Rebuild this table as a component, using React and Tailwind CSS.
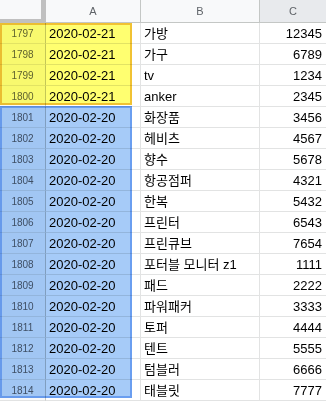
import React from "react";

const rows = [
  [1797, "2020-02-21", "가방", "12345"],
  [1798, "2020-02-21", "가구", "6789"],
  [1799, "2020-02-21", "tv", "1234"],
  [1800, "2020-02-21", "anker", "2345"],
  [1801, "2020-02-20", "화장품", "3456"],
  [1802, "2020-02-20", "헤비츠", "4567"],
  [1803, "2020-02-20", "향수", "5678"],
  [1804, "2020-02-20", "항공점퍼", "4321"],
  [1805, "2020-02-20", "한복", "5432"],
  [1806, "2020-02-20", "프린터", "6543"],
  [1807, "2020-02-20", "프린큐브", "7654"],
  [1808, "2020-02-20", "포터블 모니터 z1", "1111"],
  [1809, "2020-02-20", "패드", "2222"],
  [1810, "2020-02-20", "파워패커", "3333"],
  [1811, "2020-02-20", "토퍼", "4444"],
  [1812, "2020-02-20", "텐트", "5555"],
  [1813, "2020-02-20", "텀블러", "6666"],
  [1814, "2020-02-20", "태블릿", "7777"],
];

export default function App() {
  return (
    <div className="relative w-[326px] h-[403px] overflow-hidden bg-white font-['Liberation_Sans','Noto_Sans_CJK_KR',sans-serif] text-black">
      {/* Column headers */}
      <div className="flex h-[23px] text-[11px] text-[#5f6368]">
        <div className="w-[46px] shrink-0 flex">
          <div className="w-[41px] h-[19px] bg-[#f8f9fa]"></div>
          <div className="w-[5px] h-[23px] bg-[#c0c0c0]"></div>
        </div>
        <div className="w-[95px] shrink-0 flex items-center justify-center bg-[#f8f9fa] border-r border-b border-[#c4c7c5]">A</div>
        <div className="w-[119px] shrink-0 flex items-center justify-center bg-[#f8f9fa] border-r border-b border-[#c4c7c5]">B</div>
        <div className="flex-1 flex items-center justify-center bg-[#e8eaed] border-b border-[#c4c7c5]">C</div>
      </div>
      <div className="absolute left-0 top-[19px] w-[41px] h-[4px] bg-[#c0c0c0]"></div>

      {/* Rows */}
      {rows.map(([n, date, name, val]) => (
        <div key={n} className="flex h-[21px]">
          <div className="w-[46px] shrink-0 flex items-center justify-center bg-[#f8f9fa] border-r border-b border-r-[#c4c7c5] border-b-[#e2e3e3] text-[10px] text-[#5f6368]">
            {n}
          </div>
          <div className="w-[95px] shrink-0 flex items-center pl-[3px] pt-[1px] border-r border-b border-[#e2e3e3] text-[13px]">
            {date}
          </div>
          <div className="w-[119px] shrink-0 flex items-center pl-[3px] pt-[1px] border-r border-b border-[#e2e3e3] text-[13px] whitespace-nowrap overflow-hidden">
            {name}
          </div>
          <div className="flex-1 flex items-center justify-end pr-[4px] pt-[1px] border-b border-[#e2e3e3] text-[13px]">
            {val}
          </div>
        </div>
      ))}

      {/* Highlighted ranges */}
      <div className="absolute left-0 top-[23px] w-[132px] h-[82px] bg-[#ffff70] border-2 border-[#f1c232] mix-blend-multiply pointer-events-none"></div>
      <div className="absolute left-0 top-[106px] w-[132px] h-[292px] bg-[#a6cbf8] border-2 border-[#6a9ef0] mix-blend-multiply pointer-events-none"></div>
    </div>
  );
}
